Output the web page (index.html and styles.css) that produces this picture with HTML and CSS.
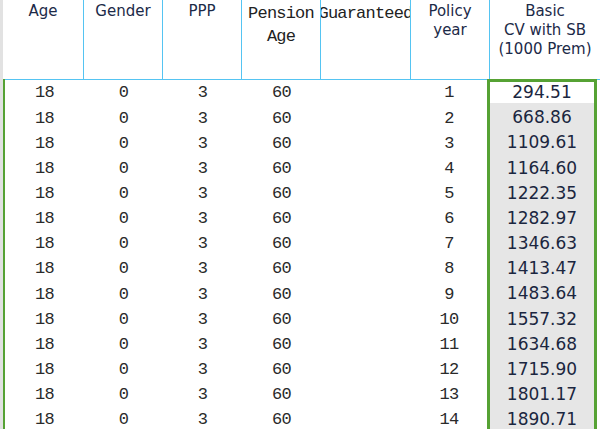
FILE: index.html
```html
<!DOCTYPE html>
<html>
<head>
<meta charset="utf-8">
<link rel="stylesheet" href="styles.css">
</head>
<body>
<div class="sheet">
  <div class="strip"></div>
  <div class="main">
    <div class="head">
      <div class="hc sans">Age</div>
      <div class="hc sans">Gender</div>
      <div class="hc sans">PPP</div>
      <div class="hc mono">Pension<br>Age</div>
      <div class="hc mono clip"><span>Guaranteed</span></div>
      <div class="hc sans">Policy<br>year</div>
      <div class="hc sans last">Basic<br>CV with SB<br>(1000 Prem)</div>
    </div>
    <div class="body">
      <div class="grid">
        <div>18</div><div>0</div><div>3</div><div>60</div><div></div><div>1</div>
        <div>18</div><div>0</div><div>3</div><div>60</div><div></div><div>2</div>
        <div>18</div><div>0</div><div>3</div><div>60</div><div></div><div>3</div>
        <div>18</div><div>0</div><div>3</div><div>60</div><div></div><div>4</div>
        <div>18</div><div>0</div><div>3</div><div>60</div><div></div><div>5</div>
        <div>18</div><div>0</div><div>3</div><div>60</div><div></div><div>6</div>
        <div>18</div><div>0</div><div>3</div><div>60</div><div></div><div>7</div>
        <div>18</div><div>0</div><div>3</div><div>60</div><div></div><div>8</div>
        <div>18</div><div>0</div><div>3</div><div>60</div><div></div><div>9</div>
        <div>18</div><div>0</div><div>3</div><div>60</div><div></div><div>10</div>
        <div>18</div><div>0</div><div>3</div><div>60</div><div></div><div>11</div>
        <div>18</div><div>0</div><div>3</div><div>60</div><div></div><div>12</div>
        <div>18</div><div>0</div><div>3</div><div>60</div><div></div><div>13</div>
        <div>18</div><div>0</div><div>3</div><div>60</div><div></div><div>14</div>
      </div>
      <div class="box">
        <div class="cv first">294.51</div>
        <div class="cv">668.86</div>
        <div class="cv">1109.61</div>
        <div class="cv">1164.60</div>
        <div class="cv">1222.35</div>
        <div class="cv">1282.97</div>
        <div class="cv">1346.63</div>
        <div class="cv">1413.47</div>
        <div class="cv">1483.64</div>
        <div class="cv">1557.32</div>
        <div class="cv">1634.68</div>
        <div class="cv">1715.90</div>
        <div class="cv">1801.17</div>
        <div class="cv">1890.71</div>
      </div>
    </div>
  </div>
</div>
</body>
</html>
```

FILE: styles.css
```css
html, body {
  margin: 0;
  padding: 0;
  background: #ffffff;
}

.sheet {
  width: 600px;
  height: 429px;
  overflow: hidden;
  display: flex;
}

.strip {
  width: 3px;
  flex: none;
  background: #e2e2e2;
}

.main {
  flex: 1;
  display: flex;
  flex-direction: column;
}

.head {
  display: grid;
  grid-template-columns: 81px 79px 79px 79px 90px 79px 110px;
  height: 80px;
}

.hc {
  box-sizing: border-box;
  height: 80px;
  border-right: 1px solid #55c4f2;
  border-bottom: 1px solid #55c4f2;
  text-align: center;
  overflow: hidden;
}

.hc.last {
  border-right: none;
}

.sans {
  font-family: "DejaVu Sans", Verdana, sans-serif;
  font-size: 15px;
  line-height: 19px;
  padding-top: 2px;
  color: #1c2a48;
}

.mono {
  font-family: "Liberation Mono", "Courier New", monospace;
  font-size: 17px;
  letter-spacing: -0.8px;
  line-height: 23px;
  padding-top: 2px;
  color: #222222;
}

.clip {
  display: flex;
  justify-content: center;
  white-space: nowrap;
}

.clip span {
  flex: none;
}

.body {
  margin-top: -1px;
  display: flex;
  align-items: flex-start;
}

.grid {
  box-sizing: border-box;
  width: 484px;
  flex: none;
  border-left: 2px solid #56a234;
  padding-top: 1.4px;
  height: 360px;
  display: grid;
  grid-template-columns: 79px 79px 79px 79px 90px 76px;
  grid-auto-rows: 25.17px;
  font-family: "Liberation Mono", "Courier New", monospace;
  font-size: 17px;
  letter-spacing: -0.8px;
  line-height: 25.17px;
  color: #2a2a2a;
  text-align: center;
}

.box {
  box-sizing: border-box;
  width: 110px;
  flex: none;
  border: 3px solid #56a234;
  border-bottom: none;
  font-family: "DejaVu Sans", Verdana, sans-serif;
  font-size: 17px;
  color: #1b2640;
  text-align: center;
}

.cv {
  box-sizing: border-box;
  height: 25.17px;
  padding-top: 4px;
  line-height: 21px;
  background: #e6e6e6;
}

.cv.first {
  height: 21.3px;
  padding-top: 0;
  line-height: 21.3px;
  background: #ffffff;
}
```
